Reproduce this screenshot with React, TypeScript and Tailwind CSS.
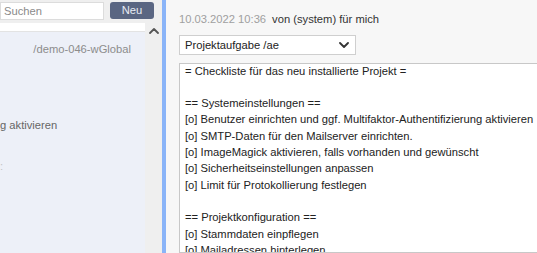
const lines = [
  "= Checkliste für das neu installierte Projekt =",
  "",
  "== Systemeinstellungen ==",
  "[o] Benutzer einrichten und ggf. Multifaktor-Authentifizierung aktivieren",
  "[o] SMTP-Daten für den Mailserver einrichten.",
  "[o] ImageMagick aktivieren, falls vorhanden und gewünscht",
  "[o] Sicherheitseinstellungen anpassen",
  "[o] Limit für Protokollierung festlegen",
  "",
  "== Projektkonfiguration ==",
  "[o] Stammdaten einpflegen",
  "[o] Mailadressen hinterlegen",
  "[o] Benutzergruppen anlegen",
];

function Caret({ up = false, className = "" }: { up?: boolean; className?: string }) {
  return (
    <svg width="10" height="6" viewBox="0 0 10 6" className={className}>
      <polyline
        points={up ? "1,5 5,1 9,5" : "1,1 5,5 9,1"}
        fill="none"
        stroke="currentColor"
        strokeWidth="1.8"
        strokeLinecap="round"
        strokeLinejoin="round"
      />
    </svg>
  );
}

export default function App() {
  return (
    <div className="flex h-[253px] w-[537px] overflow-hidden bg-[#f7f7f7] font-['Arial','Liberation_Sans',sans-serif] text-[11.2px]">
      {/* Seitenleiste */}
      <div className="flex w-[162px] shrink-0 flex-col bg-[#efefef]">
        <div className="flex h-[23px] items-start gap-[6px] pt-[2px] pr-[8px]">
          <input
            placeholder="Suchen"
            className="h-[18px] w-[104px] border border-[#dcdcdc] bg-white px-[3px] text-[11.2px] text-[#333] outline-none placeholder:text-[#8a8a8a]"
          />
          <button className="h-[17px] w-[44px] rounded-[3px] bg-[#5a6682] text-[11.2px] leading-none text-[#e8ecf4]">
            Neu
          </button>
        </div>
        <div className="flex flex-1">
          <div className="flex w-[145px] flex-col overflow-hidden">
            <div className="h-[9px] border-b border-[#e3e3e3] bg-white" />
            <div className="flex-1 bg-[#edf0f8] text-[#8c8c8c]">
              <div className="mt-[9px] pr-[14px] text-right">/demo-046-wGlobal</div>
              <div className="mt-[59px] whitespace-nowrap text-[#666]">g aktivieren</div>
              <div className="mt-[24px] text-[#c4c4c4]">:</div>
            </div>
          </div>
          <div className="flex w-[17px] justify-center pt-[5px]">
            <Caret up className="text-[#555]" />
          </div>
        </div>
      </div>
      <div className="w-[4px] shrink-0 bg-[#8ab4f8]" />

      {/* Inhalt */}
      <div className="flex min-w-0 flex-1 flex-col pl-[13px] pt-[13px]">
        <div className="flex gap-[6px] leading-[13px]">
          <span className="text-[#a0a0a0]">10.03.2022 10:36</span>
          <span className="text-[#333]">von (system) für mich</span>
        </div>
        <div className="mt-[9px] flex h-[20px] w-[177px] items-center justify-between border border-[#cfcfcf] bg-white pl-[5px] pr-[6px] text-[#222]">
          <span>Projektaufgabe /ae</span>
          <Caret className="text-[#333]" />
        </div>
        <div className="-mr-[10px] mt-[8px] flex-1 overflow-hidden border border-[#c8c8c8] bg-white pl-[5px] text-[#222]">
          <div className="-mt-[1.5px]">
            {lines.map((l, i) => (
              <div key={i} className="h-[16.33px] whitespace-nowrap leading-[16.33px]">
                {l}
              </div>
            ))}
          </div>
        </div>
      </div>
    </div>
  );
}
